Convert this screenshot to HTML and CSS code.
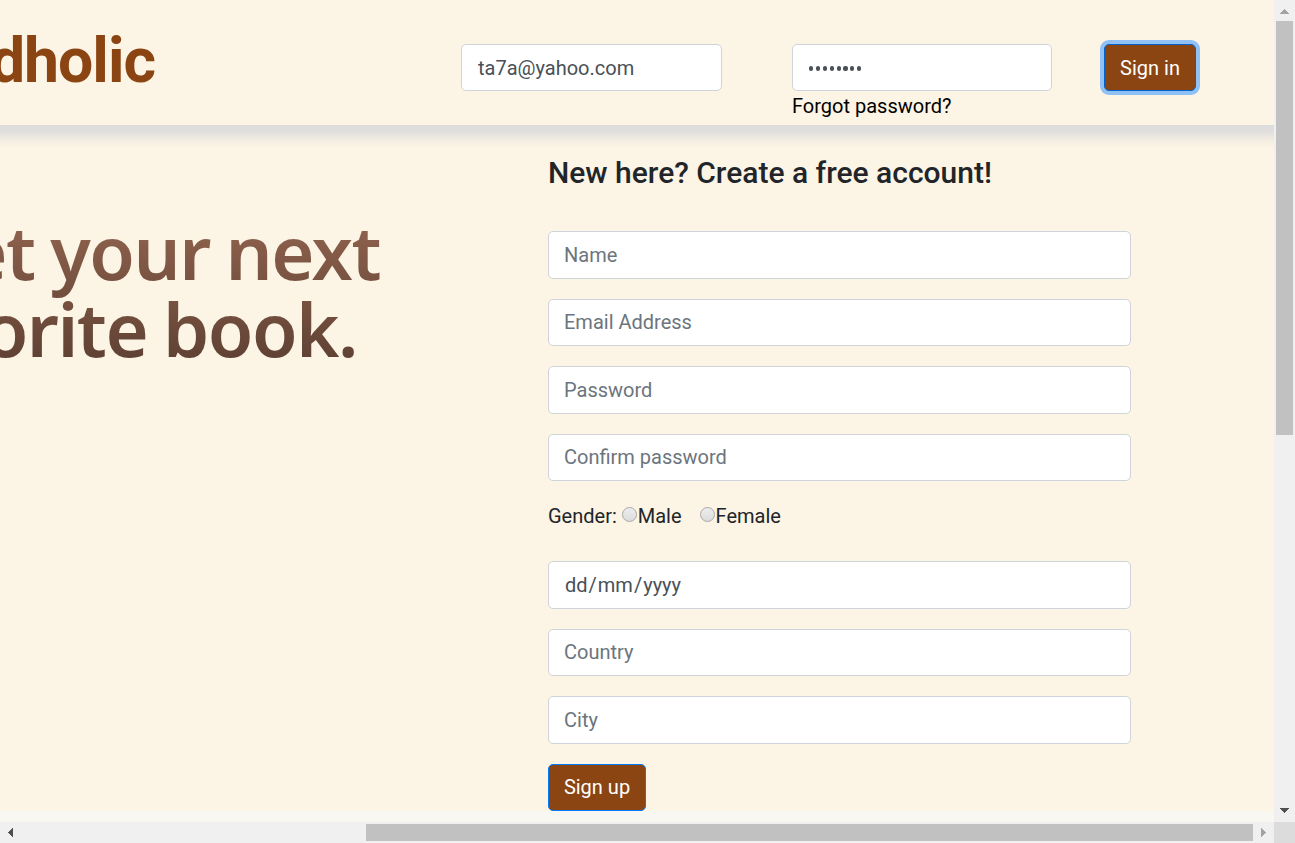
FILE: index.html
```html
<!DOCTYPE html>
<html lang="en">
<head>
<meta charset="utf-8">
<title>Sign up</title>
<link rel="stylesheet" href="styles.css">
</head>
<body>
<div class="window">
  <div class="page">
    <header class="header">
      <div class="logo"><span>dholic</span></div>
      <form class="signin">
        <input class="field email" type="text" value="ta7a@yahoo.com">
        <div class="password">
          <div class="field dots"><i></i><i></i><i></i><i></i><i></i><i></i><i></i><i></i></div>
          <a class="forgot">Forgot password?</a>
        </div>
        <button class="button focused" type="button">Sign in</button>
      </form>
    </header>
    <main class="main">
      <div class="slogan">
        <div class="line first"><span>et your next</span></div>
        <div class="line second"><span>orite book.</span></div>
      </div>
      <form class="signup">
        <h1 class="title">New here? Create a free account!</h1>
        <input class="field" type="text" placeholder="Name">
        <input class="field" type="text" placeholder="Email Address">
        <input class="field" type="text" placeholder="Password">
        <input class="field" type="text" placeholder="Confirm password">
        <div class="gender"><span class="caption">Gender:</span><i class="radio"></i><span class="male">Male</span><i class="radio"></i><span>Female</span></div>
        <div class="field date"><span>dd</span><span>/</span><span>mm</span><span>/</span><span>yyyy</span></div>
        <input class="field" type="text" placeholder="Country">
        <input class="field" type="text" placeholder="City">
        <button class="button" type="button">Sign up</button>
      </form>
    </main>
    <div class="below"></div>
  </div>
  <div class="vbar">
    <svg width="21" height="21" shape-rendering="crispEdges"><path d="M6 14h9L10.500 9z" fill="#a3a3a3"/></svg>
    <div class="vthumb"></div>
    <svg class="end" width="21" height="21" shape-rendering="crispEdges"><path d="M6 7h9L10.500 12z" fill="#505050"/></svg>
  </div>
  <div class="hbar">
    <svg width="21" height="21" shape-rendering="crispEdges"><path d="M13 6v9L8 10.500z" fill="#505050"/></svg>
    <div class="hthumb"></div>
    <svg class="end" width="21" height="21" shape-rendering="crispEdges"><path d="M8 6v9l5-4.500z" fill="#a3a3a3"/></svg>
  </div>
  <div class="corner"></div>
</div>
</body>
</html>
```
FILE: styles.css
```css
* { box-sizing: border-box; }
body {
  margin: 0;
  font: 400 20px/30px Roboto, sans-serif;
  color: #212529;
  overflow: hidden;
}
.window {
  display: grid;
  grid-template: 822px 21px / 1274px 21px;
  width: 1295px;
  height: 843px;
}
.page {
  display: flex;
  flex-direction: column;
  overflow: hidden;
  background: #fcf4e4;
}
.header {
  display: flex;
  height: 125px;
  margin: 0 -20px;
  padding: 0 20px;
  flex-shrink: 0;
  box-shadow: 0 12px 11px #dcdcdc;
  z-index: 1;
}
.logo {
  display: flex;
  justify-content: flex-end;
  width: 155px;
  padding-top: 23px;
  color: #8b4513;
  font-size: 62.5px;
  font-weight: 700;
  line-height: 75px;
  letter-spacing: -1px;
}
.signin {
  display: flex;
  align-items: flex-start;
  padding: 44px 0 0 306px;
}
.field {
  display: block;
  width: 100%;
  height: 47.5px;
  margin: 0;
  padding: 0 15px;
  border: 1px solid #ced4da;
  border-radius: 5px;
  background: #fff;
  color: #495057;
  font: 400 20px/30px Roboto, sans-serif;
  outline: none;
}
.field::placeholder { color: #6c757d; opacity: 1; }
.signin .field { height: 47px; }
.signin .email { width: 261px; padding-left: 16px; }
.password { width: 260px; margin: 0 48px 0 70px; }
.dots {
  display: flex;
  align-items: center;
  gap: 2.7px;
  padding: 2px 0 0 16px;
}
.dots i {
  width: 4.2px;
  height: 4.2px;
  border-radius: 50%;
  background: #495057;
}
.forgot { display: block; color: #000; }
.button {
  display: block;
  height: 47px;
  padding: 0;
  border: 1px solid #007bff;
  border-radius: 5px;
  background: #8b4513;
  color: #fff;
  font: 400 20px/30px Roboto, sans-serif;
  white-space: nowrap;
}
.focused {
  width: 92px;
  margin-left: 4px;
  border-color: #0062cc;
  box-shadow: 0 0 0 4px #8fc1f5;
}
.signup .button { width: 98px; }
.main { display: flex; height: 686px; flex-shrink: 0; }
.slogan {
  width: 380px;
  padding-top: 88px;
  font-family: "Noto Sans", sans-serif;
  font-weight: 600;
  font-size: 74px;
  line-height: 77px;
  letter-spacing: -1.5px;
  word-spacing: -2px;
}
.line {
  display: flex;
  justify-content: flex-end;
  height: 77px;
  white-space: nowrap;
}
.line span {
  height: 97px;
  padding-right: 2px;
  margin-right: -2px;
  background: linear-gradient(#936550, #6e4b3b);
  background-clip: text;
  -webkit-background-clip: text;
  color: transparent;
}
.second { width: 357px; }
.second span { background-image: linear-gradient(#7b5442, #543a2e); }
.signup {
  display: flex;
  flex-direction: column;
  gap: 20px;
  width: 583px;
  margin-left: 168px;
}
.title {
  margin: 29.5px 0 20.7px;
  font-size: 30px;
  font-weight: 500;
  line-height: 36px;
}
.gender { display: flex; height: 39.9px; }
.caption { margin-right: 4px; }
.radio {
  width: 15px;
  height: 15px;
  margin: 6px 1px 0 1px;
  border: 1px solid #a9a9a9;
  border-radius: 50%;
  background: linear-gradient(#ededed, #dcdcdc);
}
.male { margin-right: 17px; }
.date { display: flex; align-items: center; padding-left: 16px; gap: 1px; }
.below { height: 11px; background: #f9f7f2; }
.vbar, .hbar { display: flex; background: #f0f0f0; }
.vbar { flex-direction: column; }
.vthumb { width: 17px; height: 414px; margin-left: 2px; background: #c1c1c1; }
.hthumb { width: 887px; height: 17px; margin: 2px 0 0 345px; background: #c1c1c1; }
.vbar .end { margin-top: auto; }
.hbar .end { margin-left: auto; }
.vbar svg, .hbar svg { flex-shrink: 0; }
.corner { background: #dcdcdc; }
```
